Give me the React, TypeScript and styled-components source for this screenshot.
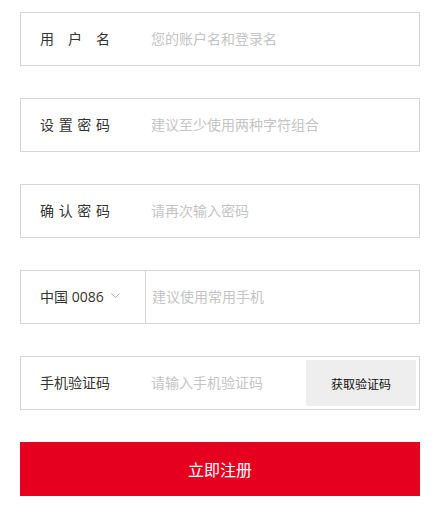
import React from "react";
import styled, { createGlobalStyle } from "styled-components";

const Global = createGlobalStyle`
  html, body { margin: 0; padding: 0; background: #fff; }
  body { font-family: "Noto Sans CJK SC", "Noto Sans", sans-serif; }
  * { box-sizing: border-box; }
`;

const Form = styled.form`
  width: 400px;
  margin: 12px 0 0 20px;
  display: flex;
  flex-direction: column;
  gap: 32px;
`;

const Field = styled.div`
  height: 54px;
  border: 1px solid #d6d6d6;
  display: flex;
  align-items: center;
  background: #fff;
`;

const Label = styled.label<{ $justify?: boolean }>`
  width: 70px;
  margin-left: 19px;
  margin-right: 41px;
  font-size: 14px;
  line-height: 20px;
  margin-top: -2px;
  color: #333;
  text-align: ${(p) => (p.$justify ? "justify" : "left")};
  text-align-last: ${(p) => (p.$justify ? "justify" : "auto")};
  white-space: nowrap;
  flex-shrink: 0;
`;

const Input = styled.input`
  flex: 1;
  min-width: 0;
  height: 100%;
  border: none;
  outline: none;
  padding: 0 0 3px 0;
  font-family: inherit;
  font-size: 14px;
  color: #333;
  background: transparent;
  &::placeholder { color: #c4c4c4; }
`;

const Country = styled.div`
  width: 125px;
  height: 100%;
  flex-shrink: 0;
  display: flex;
  align-items: center;
  padding-left: 19px;
  padding-bottom: 3px;
  gap: 7px;
  border-right: 1px solid #d6d6d6;
  font-family: "Open Sans", "Noto Sans CJK SC", sans-serif;
  font-size: 14px;
  color: #333;
  margin-right: 6px;
`;

const CodeButton = styled.button`
  width: 110px;
  height: 46px;
  margin-right: 3px;
  flex-shrink: 0;
  border: none;
  background: #eeeeee;
  font-family: inherit;
  font-size: 12px;
  color: #111;
  cursor: pointer;
`;

const Submit = styled.button`
  height: 54px;
  border: none;
  background: #e60020;
  color: #fff;
  font-family: inherit;
  font-size: 16px;
  padding-bottom: 2px;
  cursor: pointer;
`;

const Chevron = () => (
  <svg width="9" height="5" viewBox="0 0 9 5" fill="none">
    <path d="M0.3 0.5 L4.5 4.5 L8.7 0.5" stroke="#aaa" strokeWidth="0.9" />
  </svg>
);

export default function App() {
  return (
    <>
      <Global />
      <Form onSubmit={(e) => e.preventDefault()}>
        <Field>
          <Label $justify>用户名</Label>
          <Input placeholder="您的账户名和登录名" />
        </Field>
        <Field>
          <Label $justify>设置密码</Label>
          <Input type="password" placeholder="建议至少使用两种字符组合" />
        </Field>
        <Field>
          <Label $justify>确认密码</Label>
          <Input type="password" placeholder="请再次输入密码" />
        </Field>
        <Field>
          <Country>
            中国 0086 <Chevron />
          </Country>
          <Input placeholder="建议使用常用手机" />
        </Field>
        <Field>
          <Label>手机验证码</Label>
          <Input placeholder="请输入手机验证码" />
          <CodeButton type="button">获取验证码</CodeButton>
        </Field>
        <Submit type="submit">立即注册</Submit>
      </Form>
    </>
  );
}
